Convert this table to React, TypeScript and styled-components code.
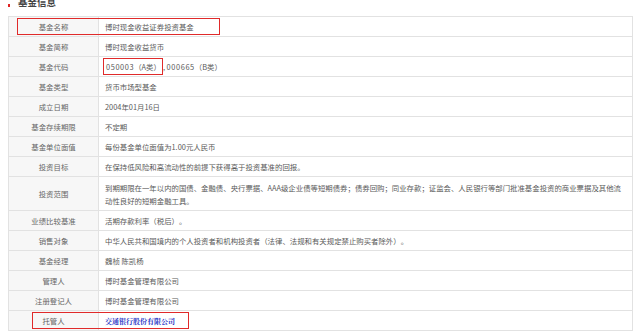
import React from 'react';
import styled, { createGlobalStyle } from 'styled-components';

interface FundRow {
    label: string;
    value: React.ReactNode;
    tall?: boolean;
    mark?: 'row' | 'narrow';
}

// full-width brackets keep their full em box, as on the source page
const withParens = (text: string) =>
    text.split(/([（）])/).map((part, i) =>
        part === '（' || part === '）' ? <Paren key={i}>{part}</Paren> : part
    );

// built inside a function so the styled parts below are defined by then
const getRows = (): FundRow[] => [
    { label: '基金名称', value: '博时现金收益证券投资基金', mark: 'row' },
    { label: '基金简称', value: '博时现金收益货币' },
    {
        label: '基金代码',
        value: (
            <>
                <CodeMark>
                    <Code>050003</Code>
                    {withParens('（A类）')}
                </CodeMark>
                , <Code>000665</Code>
                {withParens('（B类）')}
            </>
        ),
    },
    { label: '基金类型', value: '货币市场型基金' },
    { label: '成立日期', value: '2004年01月16日' },
    { label: '基金存续期限', value: '不定期' },
    { label: '基金单位面值', value: '每份基金单位面值为1.00元人民币' },
    { label: '投资目标', value: '在保持低风险和高流动性的前提下获得高于投资基准的回报。' },
    {
        label: '投资范围',
        value: '到期期限在一年以内的国债、金融债、央行票据、AAA级企业债等短期债券；债券回购；同业存款；证监会、人民银行等部门批准基金投资的商业票据及其他流动性良好的短期金融工具。',
        tall: true,
    },
    { label: '业绩比较基准', value: withParens('活期存款利率（税后）。') },
    { label: '销售对象', value: withParens('中华人民共和国境内的个人投资者和机构投资者（法律、法规和有关规定禁止购买者除外）。') },
    { label: '基金经理', value: '魏桢 陈凯杨' },
    { label: '管理人', value: '博时基金管理有限公司' },
    { label: '注册登记人', value: '博时基金管理有限公司' },
    { label: '托管人', value: <BankLink>交通银行股份有限公司</BankLink>, mark: 'narrow' },
];

function App() {
    const rows = getRows();
    return (
        <Page lang="zh-CN">
            <GlobalStyle />
            <Heading>
                <Bullet />
                <Title>基金信息</Title>
            </Heading>
            <Table>
                {rows.map((row) => (
                    <Row key={row.label} $tall={row.tall}>
                        <Label>{row.label}</Label>
                        <Value>
                            <span>{row.value}</span>
                        </Value>
                        {row.mark && <RowMark $kind={row.mark} />}
                    </Row>
                ))}
            </Table>
        </Page>
    );
}

const GlobalStyle = createGlobalStyle`
    html, body {
        margin: 0;
        padding: 0;
        background: #ffffff;
        overflow: hidden;
    }
    body {
        font-family: "Noto Sans CJK SC", "Noto Sans", sans-serif;
        color: #5a5a5a;
        text-spacing-trim: space-all;
    }
`;

const Page = styled.div`
    width: 640px;
    height: 332px;
    padding: 0 7px 0 8px;
    box-sizing: border-box;
    overflow: hidden;
`;

// heading
const Heading = styled.div`
    display: flex;
    align-items: flex-start;
    height: 16px;
    overflow: hidden;
`;
const Bullet = styled.span`
    width: 2px;
    height: 3px;
    margin-top: 4px;
    background: #e02424;
`;
const Title = styled.span`
    margin: -4px 0 0 8px;
    font-size: 9.5px;
    line-height: 12px;
    font-weight: bold;
    color: #444444;
`;

// table
const Table = styled.div`
    border-top: 1px solid #e2e2e2;
    border-left: 1px solid #e2e2e2;
    border-right: 1px solid #e2e2e2;
`;
const Row = styled.div<{ $tall?: boolean }>`
    position: relative;
    display: grid;
    grid-template-columns: 90px 1fr;
    height: ${(p) => (p.$tall ? 33 : 19)}px;
    border-bottom: 1px solid #e2e2e2;
    font-size: 7.4px;
`;
const Label = styled.div`
    display: flex;
    align-items: center;
    justify-content: center;
    background: #f7f7f7;
    border-right: 1px solid #e2e2e2;
    color: #666666;
`;
const Value = styled.div`
    display: flex;
    align-items: center;
    padding: 0 9px 0 6px;
    line-height: 13px;
    color: #5a5a5a;
`;
const Paren = styled.span`
    display: inline-block;
    width: 1em;
    text-align: center;
`;
const Code = styled.span`
    letter-spacing: 0.6px;
`;
const CodeMark = styled.span`
    display: inline-block;
    margin-left: -2px;
    padding: 2px 1px 2px 2px;
    border: 1.5px solid #e02a2a;
    line-height: 11px;
`;
const BankLink = styled.a`
    font-family: "Noto Serif CJK SC", "Noto Sans CJK SC", serif;
    font-size: 7px;
    font-weight: bold;
    color: #1d2fc4;
    text-decoration: none;
`;
const RowMark = styled.div<{ $kind: 'row' | 'narrow' }>`
    position: absolute;
    top: 1px;
    bottom: 1px;
    left: ${(p) => (p.$kind === 'row' ? 8 : 23)}px;
    width: ${(p) => (p.$kind === 'row' ? 203 : 157)}px;
    border: 1.5px solid #e02a2a;
    box-sizing: border-box;
    pointer-events: none;
`;

export default App;
